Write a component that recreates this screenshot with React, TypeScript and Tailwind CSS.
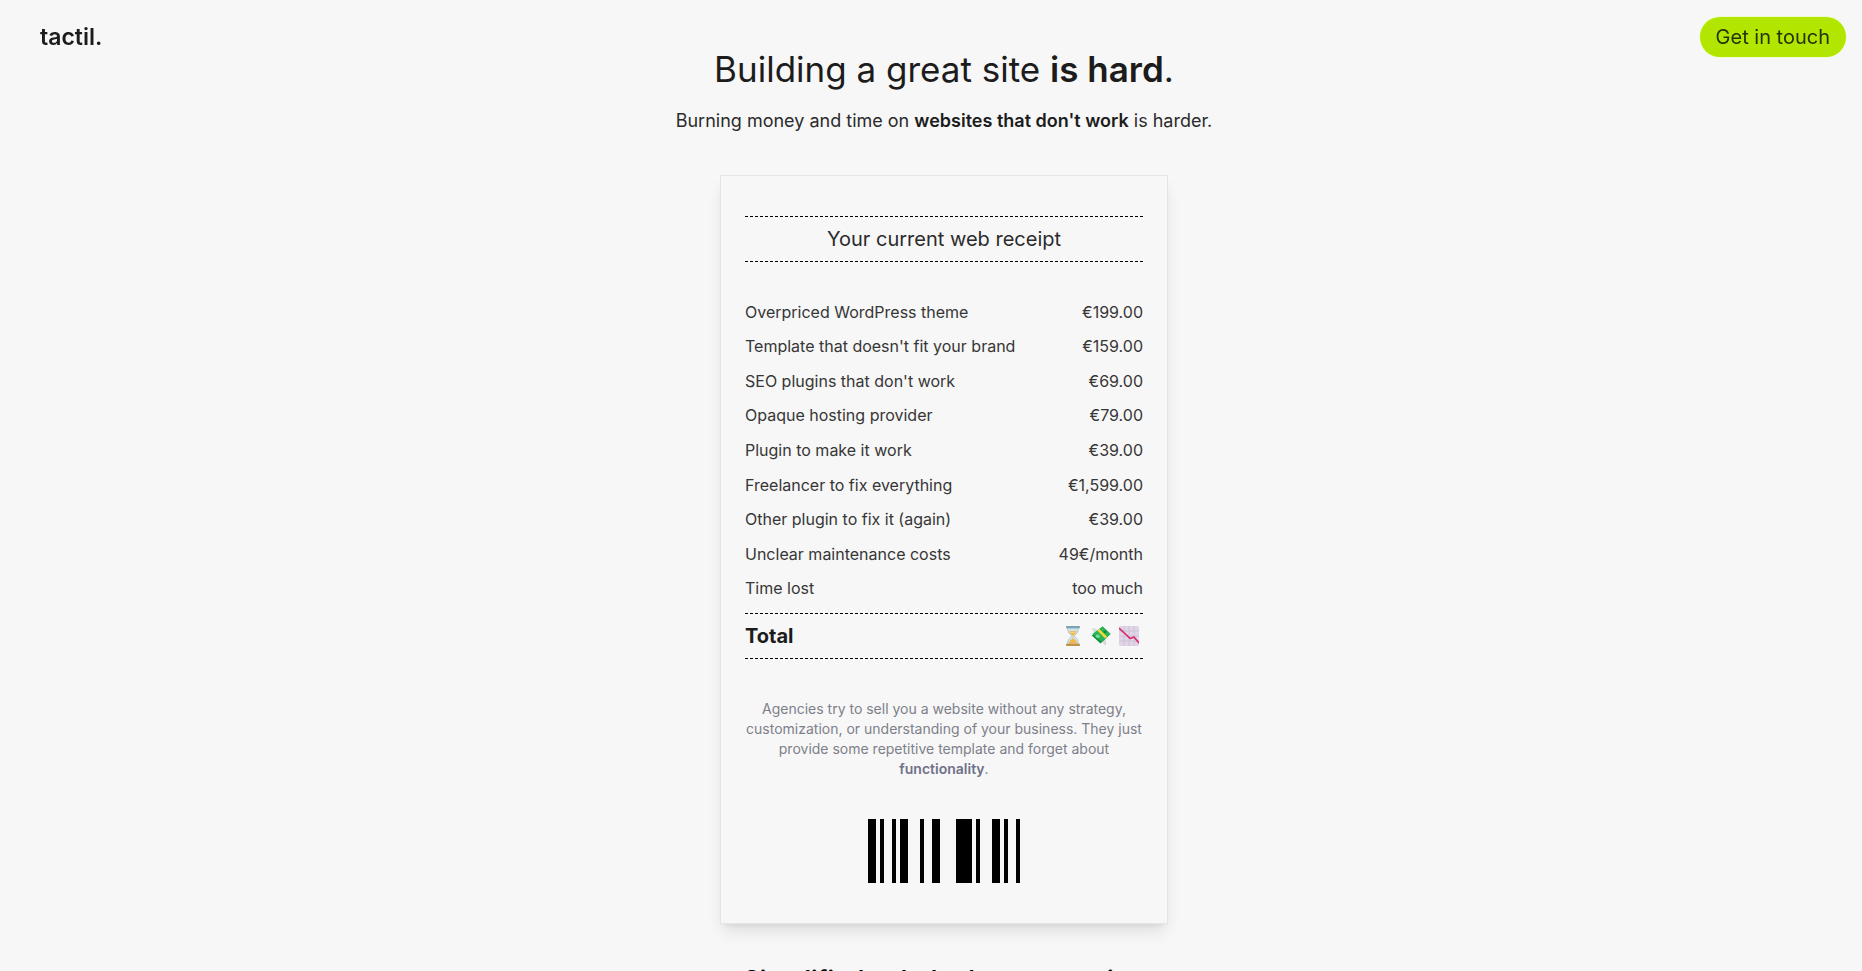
const items: [string, string][] = [
  ["Overpriced WordPress theme", "€199.00"],
  ["Template that doesn't fit your brand", "€159.00"],
  ["SEO plugins that don't work", "€69.00"],
  ["Opaque hosting provider", "€79.00"],
  ["Plugin to make it work", "€39.00"],
  ["Freelancer to fix everything", "€1,599.00"],
  ["Other plugin to fix it (again)", "€39.00"],
  ["Unclear maintenance costs", "49€/month"],
  ["Time lost", "too much"],
];

// Each bar is [offset, width] in a 152 unit wide code.
const bars: [number, number][] = [
  [0, 8], [12, 4], [24, 4], [32, 8], [52, 4], [64, 8], [88, 16], [108, 4], [124, 8], [136, 4], [148, 4],
];

function Header() {
  return (
    <header className="fixed inset-x-0 top-0 z-10 flex items-center justify-between pt-[17px] pr-4 pl-10">
      <a href="#" className="text-[23px] leading-10 font-semibold text-[#1c1c1c]">
        tactil.
      </a>
      <a
        href="#contact"
        className="rounded-full bg-[#b2e600] px-4 text-xl leading-10 text-[#26330a] ring-1 ring-[#effbd0]"
      >
        Get in touch
      </a>
    </header>
  );
}

function Hourglass() {
  return (
    <svg viewBox="0 0 20 20" className="size-5" role="img" aria-label="Hourglass">
      <path d="M4.4 2h11.2c.1 4.200-2.200 5.800-4.400 8 2.200 2.200 4.500 3.800 4.400 8H4.400c-.1-4.200 2.200-5.800 4.400-8C6.600 7.800 4.300 6.200 4.400 2z" fill="#cfe3ea" stroke="#9db9c4" strokeWidth=".6" />
      <path d="M6 5.300h8c-.8 2-2.400 3.100-3.700 4.500v3c2 .8 3.500 2 4 4.700H5.700c.5-2.700 2-3.900 4-4.700v-3C8.400 8.400 6.800 7.300 6 5.300z" fill="#f3b74a" />
      <path d="M7 6h6c-.7.8-1.600 1-3 1.100C8.600 7 7.700 6.800 7 6z" fill="#fbd98a" />
      <rect x="3" y="0" width="14" height="2.200" rx=".8" fill="#7fa3b5" />
      <rect x="3" y="17.800" width="14" height="2.200" rx=".8" fill="#c39345" />
    </svg>
  );
}

function FlyingMoney() {
  return (
    <svg viewBox="0 0 20 20" className="size-5" role="img" aria-label="Money with wings">
      <path d="M1 2.500c2.500-.6 4.500.4 6 2.500L4.500 8C3.400 6.500 1.800 5 1 2.500z" fill="#d9dcdc" />
      <path d="M11 14.500l3-1.500c1 1.700 1.500 4 1 6.500-1.900-.8-3.400-2.500-4-5z" fill="#d5d8d8" />
      <path d="M11.500 0.500l8 7.500-10 9.500L.8 9.500z" fill="#0f8f3b" />
      <path d="M11.500 0.500l8 7.500-9.300 7.400L1.600 7.800z" fill="#27b657" />
      <ellipse cx="6.700" cy="10.300" rx="2" ry="1.700" fill="#7bdc8f" />
      <ellipse cx="14" cy="5.700" rx="1.600" ry="1.300" fill="#12843a" />
      <path d="M6.200 4.400l2-1.600 8 7.900-2 1.900z" fill="#f4d53b" />
    </svg>
  );
}

function FallingChart() {
  return (
    <svg viewBox="0 0 20 20" className="size-5" role="img" aria-label="Chart decreasing">
      <rect x="0" y="0" width="20" height="20" rx="1.500" fill="#dfd5e6" />
      <path d="M5 0v20M10 0v20M15 0v20M0 5h20M0 10h20M0 15h20" stroke="#c9bfd5" strokeWidth=".8" />
      <path d="M0 2l7.500 7 3.500 3.500 4-1.500 5 6" fill="none" stroke="#d72a68" strokeWidth="1.700" strokeLinejoin="round" />
    </svg>
  );
}

function Barcode() {
  return (
    <svg viewBox="0 0 152 64" className="mx-auto mt-10 h-16 w-38" role="img" aria-label="Barcode">
      {bars.map(([x, width]) => (
        <rect key={x} x={x} y={0} width={width} height={64} fill="#000" />
      ))}
    </svg>
  );
}

function Receipt() {
  return (
    <section className="mt-10 w-full max-w-md border border-[#e5e5e5] bg-[#f7f7f7] px-6 py-10 shadow-[0_10px_15px_-3px_rgba(0,0,0,0.1),0_4px_6px_-4px_rgba(0,0,0,0.1)]">
      <h2 className="border-y border-dashed border-black py-2 text-center text-xl leading-7 text-[#2b2b2b]">
        Your current web receipt
      </h2>
      <table className="mt-8 h-[311px] w-full text-base leading-6 text-[#363636]">
        <tbody>
          {items.map(([name, price]) => (
            <tr key={name}>
              <td className="p-0 pt-px text-left">{name}</td>
              <td className="p-0 pt-px text-right">{price}</td>
            </tr>
          ))}
        </tbody>
      </table>
      <div className="mt-2 flex items-center justify-between border-y border-dashed border-black py-2 text-xl leading-7 text-[#1c1c1c]">
        <strong className="font-bold">Total</strong>
        <span className="flex gap-2 pr-1">
          <Hourglass />
          <FlyingMoney />
          <FallingChart />
        </span>
      </div>
      <p className="mt-10 text-center text-sm leading-5 text-[#7d808a]">
        Agencies try to sell you a website without any strategy, customization, or understanding of your business. They
        just provide some repetitive template and forget about{" "}
        <strong className="font-semibold text-[#6f7189]">functionality</strong>.
      </p>
      <Barcode />
    </section>
  );
}

export default function App() {
  return (
    <div className="h-screen overflow-hidden bg-[#f7f7f7] font-['Inter',sans-serif] text-[#1c1c1c]">
      <Header />
      <main className="flex flex-col items-center pt-12 pl-[26px]">
        <h1 className="text-[35px] leading-[43px]">
          Building a great site <strong className="font-semibold">is hard</strong>.
        </h1>
        <p className="mt-4 text-lg leading-7 text-[#2b2b2b]">
          Burning money and time on{" "}
          <strong className="font-semibold text-[#1c1c1c]">websites that don't work</strong> is harder.
        </p>
        <Receipt />
        <h2 className="mt-10 text-[25px] leading-8 font-semibold text-black">Simplified to help do more saving</h2>
      </main>
    </div>
  );
}
